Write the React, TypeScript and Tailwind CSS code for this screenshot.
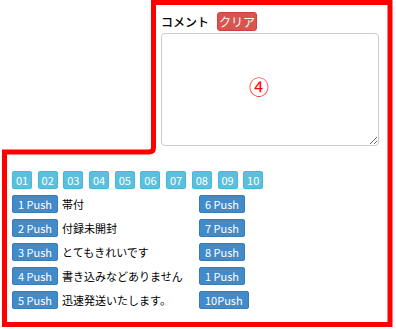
import React from "react";

const numbers = ["01", "02", "03", "04", "05", "06", "07", "08", "09", "10"];

const leftRows = [
  { label: "1 Push", text: "帯付" },
  { label: "2 Push", text: "付録未開封" },
  { label: "3 Push", text: "とてもきれいです" },
  { label: "4 Push", text: "書き込みなどありません" },
  { label: "5 Push", text: "迅速発送いたします。" },
];

const rightRows = ["6 Push", "7 Push", "8 Push", "1 Push", "10Push"];

const font = {
  fontFamily: '"Noto Sans CJK JP", "Open Sans", sans-serif',
};

function PushButton({ label }: { label: string }) {
  return (
    <button
      type="button"
      className="h-[18px] px-[5px] rounded-[2px] bg-[#428bca] border border-[#357ebd] text-white text-[11px] leading-none whitespace-nowrap"
    >
      {label}
    </button>
  );
}

export default function App() {
  return (
    <div
      className="relative w-[396px] h-[329px] bg-white text-black overflow-hidden"
      style={font}
    >
      {/* top: comment box */}
      <div className="pl-[161px] pt-[12px]">
        <div className="flex items-center h-[19px]">
          <span className="w-[56px] text-[12px] font-medium leading-none">コメント</span>
          <button
            type="button"
            className="h-[19px] w-[40px] rounded-[3px] bg-[#d9534f] border border-[#d43f3a] text-white text-[12px] leading-none"
          >
            クリア
          </button>
        </div>
        <div className="relative mt-[2px] w-[218px] h-[113px]">
          <textarea className="block w-full h-full rounded-[4px] border border-[#cccccc] bg-white focus:outline-none" />
          <span className="absolute left-[88px] top-[44px] text-[20px] leading-none text-[#ff0000] pointer-events-none">
            ④
          </span>
        </div>
      </div>

      {/* bottom: quick buttons */}
      <div className="pl-[12px] pt-[25px]">
        <div className="flex gap-[5.7px]">
          {numbers.map((n) => (
            <button
              key={n}
              type="button"
              className="h-[18px] w-[20px] rounded-[2px] bg-[#5bc0de] border border-[#46b8da] text-white text-[11px] leading-none"
            >
              {n}
            </button>
          ))}
        </div>
        <div className="mt-[6px] flex">
          <div className="w-[187px] flex flex-col gap-[6px]">
            {leftRows.map((r) => (
              <div key={r.label} className="flex items-center gap-[4px] h-[18px]">
                <PushButton label={r.label} />
                <span className="text-[11px] leading-none whitespace-nowrap">{r.text}</span>
              </div>
            ))}
          </div>
          <div className="flex flex-col gap-[6px] items-start">
            {rightRows.map((l, i) => (
              <div key={i} className="h-[18px] flex items-center">
                <PushButton label={l} />
              </div>
            ))}
          </div>
        </div>
      </div>

      {/* red annotation outline */}
      <svg
        className="absolute inset-0 pointer-events-none"
        width="396"
        height="329"
        viewBox="0 0 396 329"
      >
        <path
          d="M4.5 152 L149 152 Q153.5 152 153.5 147.5 L153.5 2.5 L390 2.5 L390 324.5 L4.5 324.5 Z"
          fill="none"
          stroke="#ff0000"
          strokeWidth="5"
        />
      </svg>
    </div>
  );
}
